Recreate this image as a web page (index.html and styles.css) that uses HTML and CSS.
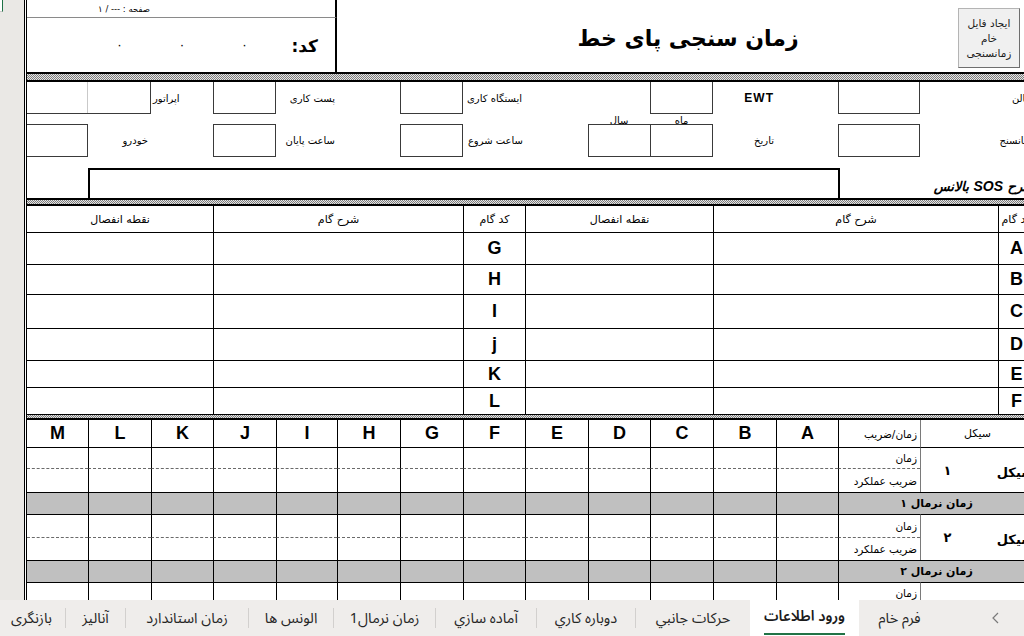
FILE: index.html
```html
<!DOCTYPE html>
<html lang="fa">
<head>
<meta charset="utf-8">
<title>زمان سنجی پای خط</title>
<link rel="stylesheet" href="styles.css">
</head>
<body>
<div class="app">
  <div class="workspace">
    <div class="gutter"><span class="selmark"></span></div>
    <div class="sheet" dir="rtl">
      <section class="head grid16">
        <div class="pg"></div>
        <div class="pgtext">صفحه : --- / ۱</div>
        <div class="codel">کد:</div>
        <div class="dot c13">۰</div>
        <div class="dot c14">۰</div>
        <div class="dot c15">۰</div>
        <h1 class="title">زمان سنجی پای خط</h1>
        <button class="btn" type="button">ایجاد فایل<br>خام<br>زمانسنجی</button>
      </section>
      <div class="band band-a"></div>
      <section class="info grid16">
        <div class="lb r1 c1 jr">سالن</div>
        <div class="box bt r1 c3"></div>
        <div class="lb r1 c5 jr p2r ewt">EWT</div>
        <div class="box bt r1 c6"></div>
        <div class="lb r1 c9 jr p3r">ایستگاه کاری</div>
        <div class="box bt r1 c10"></div>
        <div class="lb r1 c12 jr p2r">پست کاری</div>
        <div class="box bt r1 c13"></div>
        <div class="lb r1 c14 jl p2l">اپراتور</div>
        <div class="box bt nol split1 r1 c15 sp2"></div>

        <div class="lb small r2 c6 jc">ماه</div>
        <div class="lb small r2 c7 jc">سال</div>

        <div class="lb r3 c1 jr">زمانسنج</div>
        <div class="box r3 c3"></div>
        <div class="lb r3 c5 jr p2r">تاریخ</div>
        <div class="box split2 r3 c6 sp2"></div>
        <div class="lb r3 c9 jr p2r">ساعت شروع</div>
        <div class="box r3 c10"></div>
        <div class="lb r3 c12 jr p2r">ساعت پایان</div>
        <div class="box r3 c13"></div>
        <div class="lb r3 c15 jr p3r">خودرو</div>
        <div class="box nol r3 c16"></div>

        <div class="lb sos r5 c1 sp2 jr"><span>شرح <b class="lat">SOS</b> بالانس</span></div>
        <div class="bigbox"></div>
      </section>
      <div class="band band-b"></div>
      <section class="steps grid16">
        <div class="cell hd">کد گام</div><div class="cell hd sp4">شرح گام</div><div class="cell hd sp3">نقطه انفصال</div><div class="cell hd">کد گام</div><div class="cell hd sp4">شرح گام</div><div class="cell hd sp3 last">نقطه انفصال</div>
        <div class="cell code">A</div><div class="cell sp4"></div><div class="cell sp3"></div><div class="cell code">G</div><div class="cell sp4"></div><div class="cell sp3 last"></div>
        <div class="cell code">B</div><div class="cell sp4"></div><div class="cell sp3"></div><div class="cell code">H</div><div class="cell sp4"></div><div class="cell sp3 last"></div>
        <div class="cell code">C</div><div class="cell sp4"></div><div class="cell sp3"></div><div class="cell code">I</div><div class="cell sp4"></div><div class="cell sp3 last"></div>
        <div class="cell code">D</div><div class="cell sp4"></div><div class="cell sp3"></div><div class="cell code">j</div><div class="cell sp4"></div><div class="cell sp3 last"></div>
        <div class="cell code">E</div><div class="cell sp4"></div><div class="cell sp3"></div><div class="cell code">K</div><div class="cell sp4"></div><div class="cell sp3 last"></div>
        <div class="cell code">F</div><div class="cell sp4"></div><div class="cell sp3"></div><div class="cell code">L</div><div class="cell sp4"></div><div class="cell sp3 last"></div>
      </section>
      <div class="band band-c"></div>
      <section class="cycles grid16">
        <div class="cell hd sp2 cyh">سیکل</div><div class="cell hd zl">زمان/ضریب</div>
        <div class="cell hd code">A</div><div class="cell hd code">B</div><div class="cell hd code">C</div><div class="cell hd code">D</div><div class="cell hd code">E</div><div class="cell hd code">F</div><div class="cell hd code">G</div><div class="cell hd code">H</div><div class="cell hd code">I</div><div class="cell hd code">J</div><div class="cell hd code">K</div><div class="cell hd code">L</div><div class="cell hd code last">M</div>

        <div class="cell rs2 cname">سیکل</div><div class="cell rs2 cnum">۱</div>
        <div class="cell zl">زمان</div><div class="cell"></div><div class="cell"></div><div class="cell"></div><div class="cell"></div><div class="cell"></div><div class="cell"></div><div class="cell"></div><div class="cell"></div><div class="cell"></div><div class="cell"></div><div class="cell"></div><div class="cell"></div><div class="cell last"></div>
        <div class="cell sub zl">ضریب عملکرد</div><div class="cell sub"></div><div class="cell sub"></div><div class="cell sub"></div><div class="cell sub"></div><div class="cell sub"></div><div class="cell sub"></div><div class="cell sub"></div><div class="cell sub"></div><div class="cell sub"></div><div class="cell sub"></div><div class="cell sub"></div><div class="cell sub"></div><div class="cell sub last"></div>
        <div class="cell gray norm sp3">زمان نرمال ۱</div><div class="cell gray"></div><div class="cell gray"></div><div class="cell gray"></div><div class="cell gray"></div><div class="cell gray"></div><div class="cell gray"></div><div class="cell gray"></div><div class="cell gray"></div><div class="cell gray"></div><div class="cell gray"></div><div class="cell gray"></div><div class="cell gray"></div><div class="cell gray last"></div>

        <div class="cell rs2 cname">سیکل</div><div class="cell rs2 cnum">۲</div>
        <div class="cell zl">زمان</div><div class="cell"></div><div class="cell"></div><div class="cell"></div><div class="cell"></div><div class="cell"></div><div class="cell"></div><div class="cell"></div><div class="cell"></div><div class="cell"></div><div class="cell"></div><div class="cell"></div><div class="cell"></div><div class="cell last"></div>
        <div class="cell sub zl">ضریب عملکرد</div><div class="cell sub"></div><div class="cell sub"></div><div class="cell sub"></div><div class="cell sub"></div><div class="cell sub"></div><div class="cell sub"></div><div class="cell sub"></div><div class="cell sub"></div><div class="cell sub"></div><div class="cell sub"></div><div class="cell sub"></div><div class="cell sub"></div><div class="cell sub last"></div>
        <div class="cell gray norm sp3">زمان نرمال ۲</div><div class="cell gray"></div><div class="cell gray"></div><div class="cell gray"></div><div class="cell gray"></div><div class="cell gray"></div><div class="cell gray"></div><div class="cell gray"></div><div class="cell gray"></div><div class="cell gray"></div><div class="cell gray"></div><div class="cell gray"></div><div class="cell gray"></div><div class="cell gray last"></div>

        <div class="cell rs2 cname"></div><div class="cell rs2 cnum"></div>
        <div class="cell zl top">زمان</div><div class="cell"></div><div class="cell"></div><div class="cell"></div><div class="cell"></div><div class="cell"></div><div class="cell"></div><div class="cell"></div><div class="cell"></div><div class="cell"></div><div class="cell"></div><div class="cell"></div><div class="cell"></div><div class="cell last"></div>
        <div class="cell sub zl"></div><div class="cell sub"></div><div class="cell sub"></div><div class="cell sub"></div><div class="cell sub"></div><div class="cell sub"></div><div class="cell sub"></div><div class="cell sub"></div><div class="cell sub"></div><div class="cell sub"></div><div class="cell sub"></div><div class="cell sub"></div><div class="cell sub"></div><div class="cell sub last"></div>
      </section>
    </div>
  </div>
  <nav class="tabs" dir="rtl">
    <div class="tabs-nav">
      <svg width="7" height="12" viewBox="0 0 7 12"><polyline points="6,1 1,6 6,11" fill="none" stroke="#7a7a7a" stroke-width="1.2"/></svg>
    </div>
    <div class="tab w81">فرم خام</div>
    <div class="tab active w109"><span>ورود اطلاعات</span></div>
    <div class="tab w114">حرکات جانبي</div>
    <i class="sep"></i>
    <div class="tab w98">دوباره كاري</div>
    <i class="sep"></i>
    <div class="tab w100">آماده سازي</div>
    <i class="sep"></i>
    <div class="tab w101">زمان نرمال1</div>
    <i class="sep"></i>
    <div class="tab w84">الونس ها</div>
    <i class="sep"></i>
    <div class="tab w122">زمان استاندارد</div>
    <i class="sep"></i>
    <div class="tab w59">آنالیز</div>
    <i class="sep"></i>
    <div class="tab w67">بازنگری</div>
  </nav>
</div>
</body>
</html>
```

FILE: styles.css
```css
* { box-sizing: border-box; margin: 0; padding: 0; }
html, body { width: 1024px; height: 636px; overflow: hidden; background: #fff; }
body { font-family: "DejaVu Sans", "Liberation Sans", sans-serif; color: #000; }

.app { display: flex; flex-direction: column; width: 1024px; height: 636px; }
.workspace { display: flex; height: 600px; flex: none; overflow: hidden; }
.gutter { flex: none; width: 24px; background: #eae8e5; }
.selmark { display: block; width: 3px; height: 12px; background: #fff; border-right: 1px solid #1e7145; border-bottom: 1px solid #c8c8c8; }
.sheet { flex: none; width: 1010px; border-left: 3px double #000; background: #fff; }

.grid16 {
  display: grid;
  grid-template-columns: 36px 78px 82px 62px 63px 63px 62px 63px 62px 63px 63px 61px 63px 62px 63px 61px;
}

.c1 { grid-column: 1; } .c2 { grid-column: 2; } .c3 { grid-column: 3; } .c4 { grid-column: 4; }
.c5 { grid-column: 5; } .c6 { grid-column: 6; } .c7 { grid-column: 7; } .c8 { grid-column: 8; }
.c9 { grid-column: 9; } .c10 { grid-column: 10; } .c11 { grid-column: 11; } .c12 { grid-column: 12; }
.c13 { grid-column: 13; } .c14 { grid-column: 14; } .c15 { grid-column: 15; } .c16 { grid-column: 16; }
.sp2 { grid-column-end: span 2; } .sp3 { grid-column-end: span 3; } .sp4 { grid-column-end: span 4; }
.rs2 { grid-row-end: span 2; }
.r1 { grid-row: 1; } .r2 { grid-row: 2; } .r3 { grid-row: 3; } .r4 { grid-row: 4; } .r5 { grid-row: 5; }

/* header */
.head { grid-template-rows: 18px 54px; }
.pg { grid-column: 12 / 17; grid-row: 1; border-bottom: 1px solid #8a8a8a; border-right: 2px solid #000; }
.pgtext { grid-column: 15; grid-row: 1; display: flex; align-items: center; font-size: 8.5px; white-space: nowrap; padding-right: 1px; }
.codel { grid-column: 12; grid-row: 2; border-right: 2px solid #000; display: flex; align-items: center; font-size: 17px; font-weight: bold; padding-right: 17px; padding-top: 2px; }
.dot { grid-row: 2; display: flex; align-items: center; justify-content: center; font-size: 12px; }
.title { grid-column: 1 / 12; grid-row: 1 / 3; display: flex; align-items: center; justify-content: center; font-size: 22px; font-weight: bold; padding-left: 5px; padding-top: 4px; white-space: nowrap; }
.btn {
  grid-column: 1 / 3; grid-row: 1 / 3; justify-self: end; align-self: start;
  margin: 8px 0 0 38px; width: 62px; height: 60px;
  font-family: "DejaVu Sans", sans-serif; font-size: 10.5px; line-height: 15px; color: #1a1a1a;
  background: #f0f0f0; border: 1px solid #b4b4b4; border-right-color: #6e6e6e; border-bottom-color: #6e6e6e;
}

/* bands */
.band { background: repeating-conic-gradient(#7d7d7d 0 25%, #e4e4e4 0 50%) 0 0 / 2px 2px; border-top: 2px solid #000; border-bottom: 2px solid #000; }
.band-a { height: 10px; }
.band-b { height: 8px; }
.band-c { height: 6px; border-top-width: 1px; }

/* info */
.info { grid-template-rows: 32px 10px 33px 11px 30px; }
.box { border: 1px solid #3a3a3a; }
.bt { border-top: none; }
.nol { border-left: none; }
.split1 { background: linear-gradient(#c9c9c9, #c9c9c9) 60px 0 / 1px 100% no-repeat; }
.split2 { background: linear-gradient(#3a3a3a, #3a3a3a) 61px 0 / 1px 100% no-repeat; }
.lb { display: flex; align-items: center; font-size: 10px; white-space: nowrap; }
.jr { justify-content: flex-start; }
.jl { justify-content: flex-end; }
.jc { justify-content: center; }
.p2r { padding-right: 2px; } .p3r { padding-right: 3px; } .p2l { padding-left: 2px; }
.small { align-items: flex-end; line-height: 1; margin-bottom: -2px; font-size: 10px; }
.ewt { font-family: "Liberation Sans", Arial, sans-serif; font-weight: bold; font-size: 12px; letter-spacing: 1px; }
.sos { font-weight: bold; font-style: italic; font-size: 13px; padding-top: 6px; }
.lat { font-family: "Liberation Sans", Arial, sans-serif; font-size: 14px; }
.bigbox { grid-column: 4 / 16; grid-row: 5; border: 2px solid #000; border-bottom: none; margin-left: 0; margin-right: -2px; }

/* tables */
.steps { grid-template-rows: 26px 32px 30px 34px 32px 27px 27px; }
.cycles { grid-template-rows: 27px 21px 24px 22px 23px 23px 22px 23px 23px; }
.cell { display: flex; align-items: center; justify-content: center; border-left: 1px solid #000; border-top: 1px solid #000; font-size: 11px; white-space: nowrap; }
.hd { border-top: none; }
.last { border-left: none; }
.code { font-family: "Liberation Sans", Arial, sans-serif; font-weight: bold; font-size: 18px; }
.cyh { border-left-color: #7a7a7a; font-size: 11px; }
.zl { justify-content: flex-start; padding-right: 3px; font-size: 10.5px; }
.top { align-items: flex-start; padding-top: 4px; }
.sub { border-top: 1px dashed #6a6a6a; }
.cname { border-left: none; justify-content: flex-start; font-weight: bold; font-size: 13px; padding-top: 4px; }
.cnum { border-left-color: #7a7a7a; font-weight: bold; font-size: 13px; padding-right: 24px; }
.gray { background: #c0c0c0; }
.norm { font-weight: bold; font-size: 11px; }

/* tabs */
.tabs { flex: none; height: 36px; display: flex; background: #efedeb; overflow: hidden; font-family: "Noto Sans Arabic", "DejaVu Sans", sans-serif; font-size: 14.5px; color: #262626; }
.tabs-nav { flex: none; width: 84px; display: flex; align-items: center; padding-right: 25px; }
.tab { flex: none; display: flex; align-items: center; justify-content: center; white-space: nowrap; }
.tab.active { background: #fff; font-weight: 600; color: #1b1b1b; }
.tab.active span { border-bottom: 2px solid #217346; padding-bottom: 1px; }
.sep { flex: none; display: block; width: 1px; height: 20px; align-self: center; background: #d2d0ce; }
.w59 { width: 59px; } .w67 { width: 67px; } .w81 { width: 81px; } .w84 { width: 84px; }
.w98 { width: 98px; } .w100 { width: 100px; } .w101 { width: 101px; } .w109 { width: 109px; }
.w114 { width: 114px; } .w122 { width: 122px; }
```
